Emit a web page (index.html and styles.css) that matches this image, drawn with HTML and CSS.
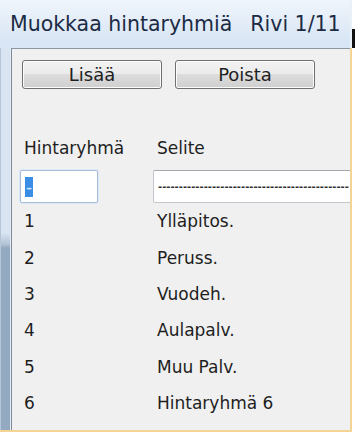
FILE: index.html
```html
<!DOCTYPE html>
<html lang="fi">
<head>
  <meta charset="UTF-8">
  <meta name="viewport" content="width=device-width, initial-scale=1.0">
  <title>Muokkaa hintaryhmiä</title>
  <link rel="stylesheet" href="styles.css">
</head>
<body>
  <div class="window">
    <div class="title-bar">
      <span class="title">Muokkaa hintaryhmiä</span>
      <span class="row-count">Rivi 1/11</span>
    </div>
    <div class="frame">
      <div class="client">
        <div class="toolbar">
          <button class="btn">Lisää</button>
          <button class="btn">Poista</button>
        </div>

        <div class="grid header">
          <span>Hintaryhmä</span>
          <span>Selite</span>
        </div>

        <div class="grid edit-row">
          <div class="field field-code"><span class="caret">-</span></div>
          <div class="field field-desc">----------------------------------------------</div>
        </div>

        <div class="grid row"><span>1</span><span>Ylläpitos.</span></div>
        <div class="grid row"><span>2</span><span>Peruss.</span></div>
        <div class="grid row"><span>3</span><span>Vuodeh.</span></div>
        <div class="grid row"><span>4</span><span>Aulapalv.</span></div>
        <div class="grid row"><span>5</span><span>Muu Palv.</span></div>
        <div class="grid row"><span>6</span><span>Hintaryhmä 6</span></div>
      </div>
    </div>
  </div>
  <div class="edge">
    <div class="edge-mark"></div>
  </div>
</body>
</html>
```

FILE: styles.css
```css
body {
  margin: 0;
  width: 355px;
  height: 434px;
  overflow: hidden;
  background: #fff;
  font-family: "DejaVu Sans", sans-serif;
  color: #1e1e1e;
  display: flex;
}

.window {
  width: 352px;
  height: 432px;
  flex: none;
  background: linear-gradient(#f0f5fb, #d9e6f5 40px);
  display: flex;
  flex-direction: column;
}

.title-bar {
  height: 48px;
  flex: none;
  display: flex;
  align-items: center;
  padding-left: 10px;
  font-size: 20.5px;
  color: #1c2b44;
  white-space: nowrap;
  overflow: hidden;
  border-right: 2px solid #e9f0f8;
  box-sizing: border-box;
}

.row-count {
  margin-left: 18px;
}

.frame {
  flex: 1;
  display: flex;
  padding-left: 11px;
  background:
    linear-gradient(90deg, #b5c6d8 1px, transparent 1px, transparent 10px, #e4edf7 10px),
    linear-gradient(#d8e4f1 185px, #b3c4d6 196px, #93a9c0 200px);
  border-right: 2px solid #f3d495;
  border-bottom: 2px solid #f3d495;
}

.client {
  flex: 1;
  background: #f0f0f0;
  border-left: 1px solid #7e8a98;
  border-top: 1px solid #8d97a3;
  overflow: hidden;
  font-size: 17px;
}

.toolbar {
  display: flex;
  gap: 13px;
  padding: 11px 0 0 10px;
}

.btn {
  width: 140px;
  height: 29px;
  font-family: inherit;
  font-size: 18px;
  color: #1e1e1e;
  border: 1px solid #707070;
  border-radius: 3px;
  background: linear-gradient(#f2f2f2, #ebebeb 50%, #dddddd 50%, #cfcfcf);
  box-shadow: inset 0 0 0 1px #fcfcfc;
}

.grid {
  display: grid;
  grid-template-columns: 133px 1fr;
  padding-left: 12px;
}

.header {
  margin-top: 47px;
  height: 24px;
  align-items: center;
}

.edit-row {
  margin-top: 10px;
  height: 33px;
  padding-left: 8px;
  grid-template-columns: 133px 1fr;
}

.field {
  background: #fff;
  border: 1px solid #c3c6cc;
  border-top-color: #a4a8ae;
  border-radius: 2px;
  height: 33px;
  box-sizing: border-box;
  display: flex;
  align-items: center;
  padding-left: 4px;
}

.field-code {
  width: 78px;
  border-color: #a9bed8;
  box-shadow: 0 0 0 1px #dbe7f4;
}

.caret {
  background: #3a8ee6;
  color: #dce9f8;
  width: 8px;
  height: 20px;
  line-height: 20px;
  text-align: center;
}

.field-desc {
  margin-right: -4px;
  font-size: 10px;
  font-weight: bold;
  white-space: nowrap;
  overflow: hidden;
  color: #333;
}

.row {
  height: 36.4px;
  align-items: center;
}

.edge {
  flex: 1;
}

.edge-mark {
  margin-top: 29px;
  height: 19px;
  background: #111;
}
```
